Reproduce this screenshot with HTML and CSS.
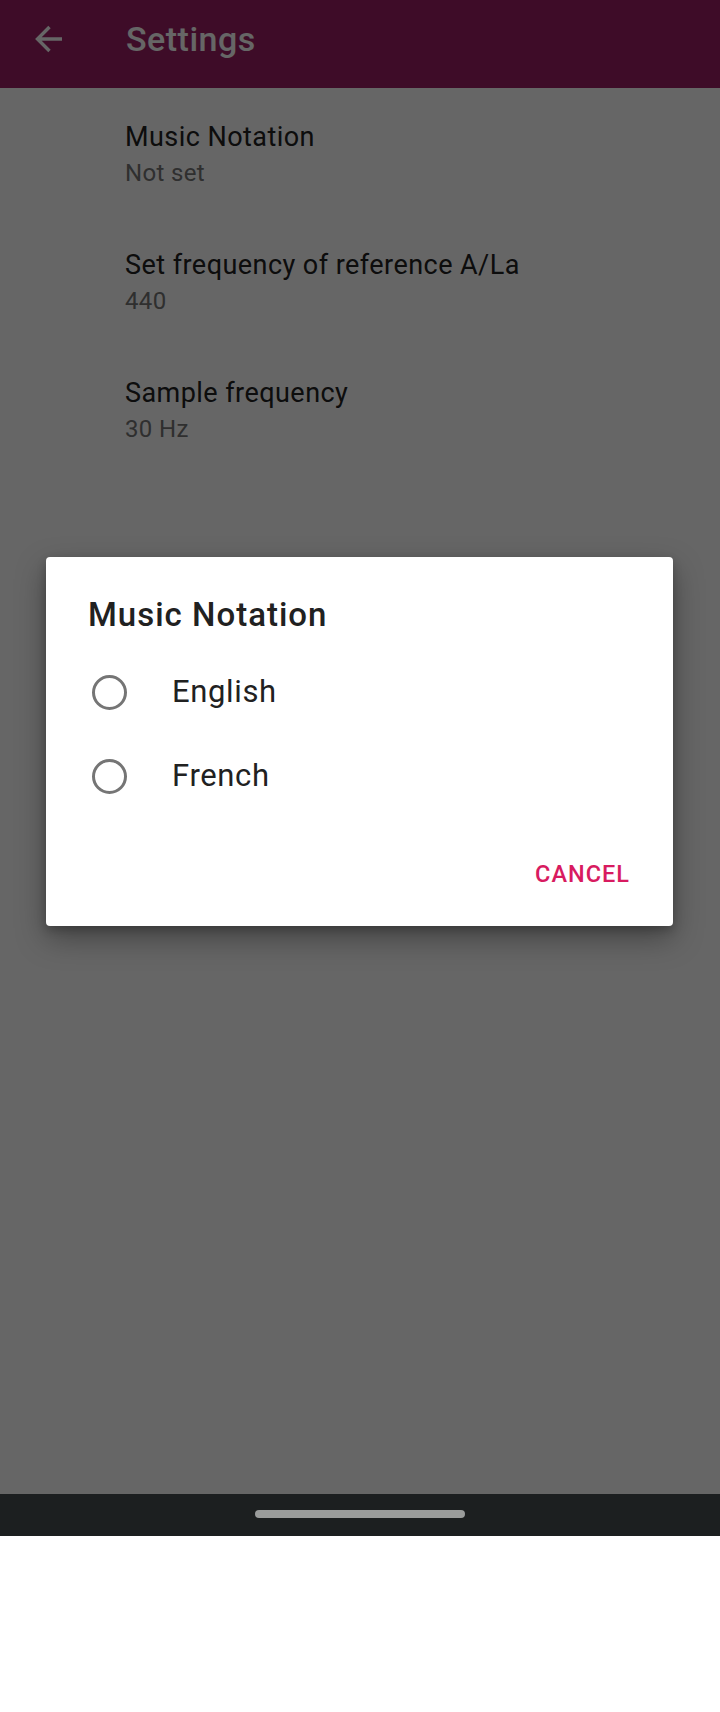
FILE: index.html
```html
<!DOCTYPE html>
<html lang="en">
<head>
<meta charset="utf-8">
<title>Settings</title>
<link rel="stylesheet" href="styles.css">
</head>
<body>
<div class="device">
  <div class="screen">
    <header class="appbar">
      <span class="back">
        <svg viewBox="0 0 28 28" width="28" height="28" aria-hidden="true">
          <path d="M27 14H2.5M14.5 2L2.5 14L14.5 26" fill="none" stroke="#ffffff" stroke-width="3.4"/>
        </svg>
      </span>
      <h1 class="appbar-title">Settings</h1>
    </header>
    <ul class="prefs">
      <li class="pref">
        <span class="pref-title">Music Notation</span>
        <span class="pref-summary">Not set</span>
      </li>
      <li class="pref">
        <span class="pref-title">Set frequency of reference A/La</span>
        <span class="pref-summary">440</span>
      </li>
      <li class="pref">
        <span class="pref-title">Sample frequency</span>
        <span class="pref-summary">30 Hz</span>
      </li>
    </ul>
    <div class="scrim">
      <div class="dialog">
        <h2 class="dialog-title">Music Notation</h2>
        <div class="options">
          <div class="option"><span class="radio"></span><span class="option-label">English</span></div>
          <div class="option"><span class="radio"></span><span class="option-label">French</span></div>
        </div>
        <div class="actions">
          <span class="btn">CANCEL</span>
        </div>
      </div>
    </div>
  </div>
  <div class="navbar"><span class="handle"></span></div>
</div>
</body>
</html>
```

FILE: styles.css
```css
* { box-sizing: border-box; }
html, body {
  margin: 0;
  padding: 0;
  background: #ffffff;
  font-family: Roboto, "Noto Sans", "Liberation Sans", sans-serif;
}
.device {
  width: 720px;
  height: 1712px;
  display: flex;
  flex-direction: column;
  background: #ffffff;
}
.screen {
  position: relative;
  height: 1494px;
  background: #ffffff;
  overflow: hidden;
}
.appbar {
  height: 88px;
  background: #9b2064;
  display: flex;
  align-items: flex-start;
  padding-left: 35px;
}
.back {
  width: 28px;
  height: 28px;
  display: flex;
  margin-top: 25px;
}
.appbar-title {
  margin: 19px 0 0 63px;
  font-size: 34px;
  font-weight: 500;
  letter-spacing: 0.5px;
  color: #ffffff;
  line-height: 40px;
}
.prefs {
  list-style: none;
  margin: 0;
  padding: 0;
}
.pref {
  display: flex;
  flex-direction: column;
  gap: 5px;
  padding: 33px 0 28px 125px;
}
.pref-title {
  font-size: 27px;
  line-height: 32px;
  letter-spacing: 0.45px;
  color: #212121;
}
.pref-summary {
  font-size: 24px;
  line-height: 30px;
  letter-spacing: 0.35px;
  color: #757575;
}
.scrim {
  position: absolute;
  inset: 0;
  background: rgba(0, 0, 0, 0.6);
  display: flex;
  align-items: center;
  justify-content: center;
}
.dialog {
  width: 627px;
  height: 369px;
  margin-bottom: 11px;
  margin-left: -1px;
  background: #ffffff;
  border-radius: 4px;
  box-shadow: 0 12px 30px rgba(0, 0, 0, 0.35), 0 4px 10px rgba(0, 0, 0, 0.2);
  padding-top: 38px;
  display: flex;
  flex-direction: column;
}
.dialog-title {
  margin: 0;
  padding-left: 42px;
  font-size: 33px;
  line-height: 40px;
  font-weight: 500;
  letter-spacing: 1px;
  color: #212121;
}
.options {
  margin-top: 15px;
  display: flex;
  flex-direction: column;
}
.option {
  height: 84px;
  display: flex;
  align-items: center;
  padding-left: 46px;
}
.radio {
  width: 35px;
  height: 35px;
  border: 3px solid #757575;
  border-radius: 50%;
  flex: none;
}
.option-label {
  margin-left: 45px;
  font-size: 31px;
  line-height: 40px;
  letter-spacing: 0.65px;
  color: #212121;
}
.actions {
  margin-top: 38px;
  display: flex;
  justify-content: flex-end;
  padding-right: 43px;
}
.btn {
  font-size: 23.5px;
  line-height: 36px;
  font-weight: 500;
  letter-spacing: 1px;
  color: #d81b60;
}
.navbar {
  height: 42px;
  background: #1c1f20;
  display: flex;
  justify-content: center;
  padding-top: 16px;
}
.handle {
  width: 210px;
  height: 8px;
  border-radius: 4px;
  background: #9a9c9b;
}
```
